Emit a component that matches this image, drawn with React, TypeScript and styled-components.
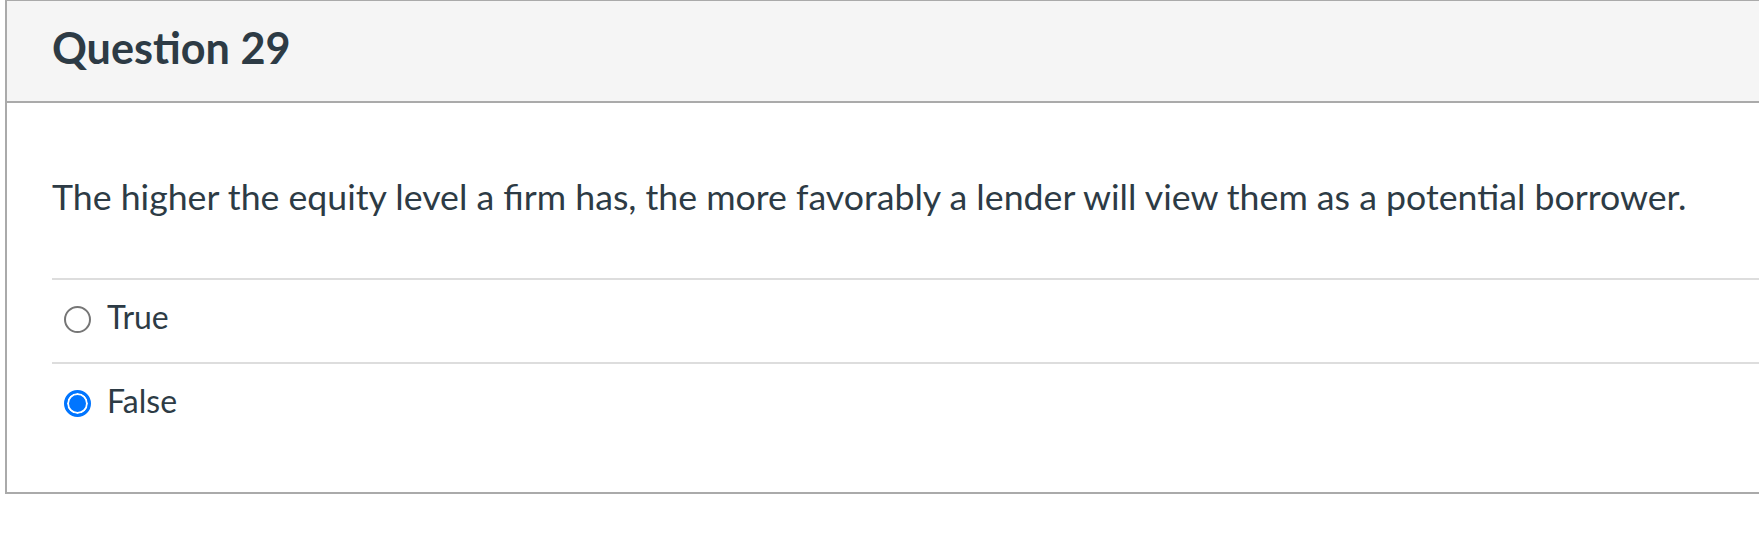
import styled, { createGlobalStyle } from 'styled-components';

const GlobalStyle = createGlobalStyle`
  body {
    margin: 0;
    background: #ffffff;
    font-family: Lato, 'Open Sans', sans-serif;
    color: #2d3b45;
  }
`;

type Answer = {
  id: string;
  label: string;
};

const answers: Answer[] = [
  { id: 'true', label: 'True' },
  { id: 'false', label: 'False' },
];

export default function App() {
  const selected = 'false';

  return (
    <>
      <GlobalStyle />
      <StyledCard>
        <StyledHeader>
          <StyledTitle>Question 29</StyledTitle>
        </StyledHeader>
        <StyledBody>
          <StyledQuestionText>
            The higher the equity level a firm has, the more favorably a lender
            will view them as a potential borrower.
          </StyledQuestionText>
          <StyledAnswers>
            {answers.map((answer) => (
              <StyledAnswerRow key={answer.id}>
                <StyledRadio
                  type="radio"
                  name="question-29"
                  id={`answer-${answer.id}`}
                  defaultChecked={answer.id === selected}
                />
                <StyledLabel htmlFor={`answer-${answer.id}`}>
                  {answer.label}
                </StyledLabel>
              </StyledAnswerRow>
            ))}
          </StyledAnswers>
        </StyledBody>
      </StyledCard>
    </>
  );
}

const StyledCard = styled.div`
  margin-left: 5px;
  border-top: 1px solid #aaaaaa;
  border-left: 2px solid #aaaaaa;
  border-bottom: 2px solid #aaaaaa;
  background: #ffffff;
`;

const StyledHeader = styled.div`
  display: flex;
  align-items: flex-start;
  height: 102px;
  box-sizing: border-box;
  padding: 20px 45px 0;
  background: #f5f5f5;
  border-bottom: 2px solid #aaaaaa;
`;

const StyledTitle = styled.h2`
  margin: 0;
  font-size: 43.2px;
  line-height: 53px;
  font-weight: 700;
  color: #2d3b45;
`;

const StyledBody = styled.div`
  padding: 67px 0 46px 45px;
`;

const StyledQuestionText = styled.p`
  margin: 0 0 54px;
  font-size: 35.7px;
  line-height: 54px;
  font-weight: 400;
  white-space: nowrap;
`;

const StyledAnswers = styled.div`
  display: flex;
  flex-direction: column;
`;

const StyledAnswerRow = styled.div`
  display: flex;
  align-items: center;
  gap: 16px;
  padding: 13px 0 21px 12px;
  border-top: 2px solid #dddddd;
`;

const StyledRadio = styled.input`
  appearance: none;
  flex: none;
  width: 27px;
  height: 27px;
  margin: 4px 0 0;
  box-sizing: border-box;
  border-radius: 50%;
  border: 2px solid #767676;
  background: #ffffff;

  &:checked {
    border: 3px solid #0075ff;
    background: #0075ff;
    box-shadow: inset 0 0 0 2px #ffffff;
  }
`;

const StyledLabel = styled.label`
  font-size: 32px;
  line-height: 48px;
  color: #2d3b45;
`;
